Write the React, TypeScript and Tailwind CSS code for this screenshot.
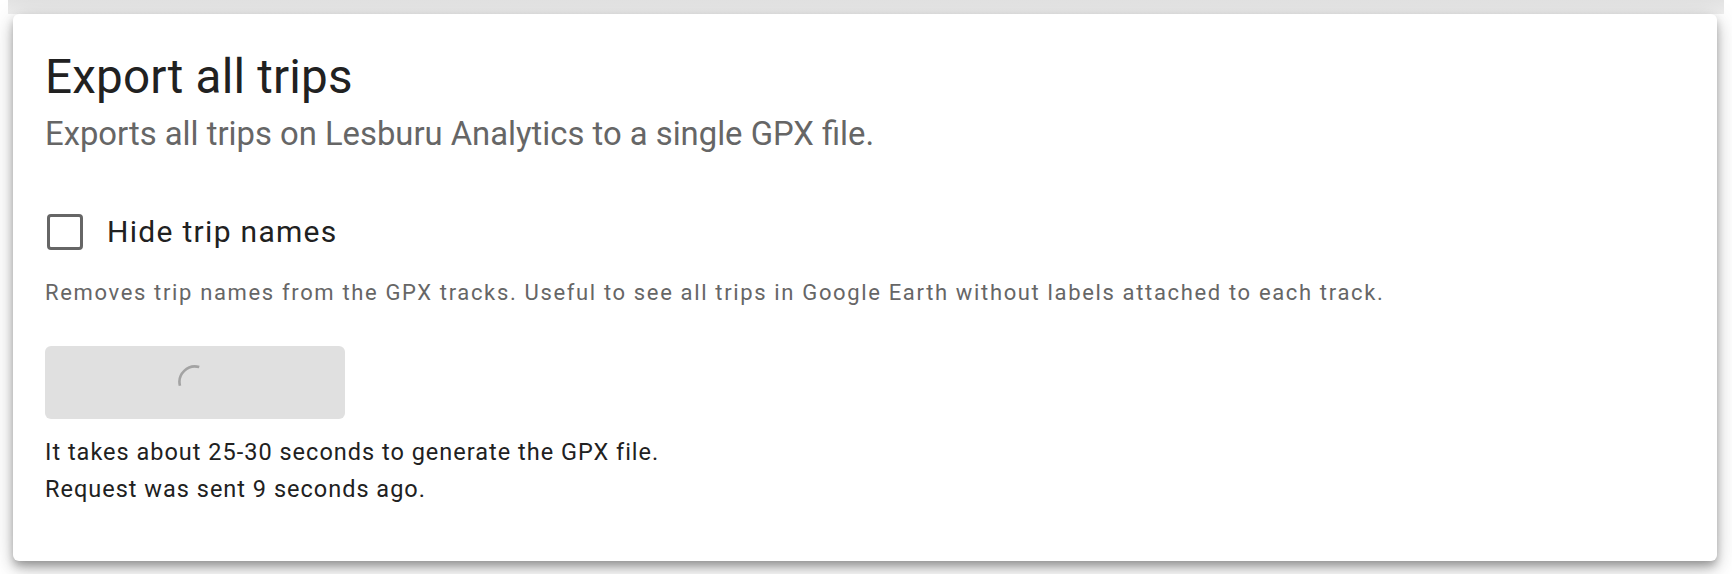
export default function App() {
  return (
    <div className="w-[1732px] h-[574px] bg-white overflow-hidden" style={{ fontFamily: 'Roboto, "Liberation Sans", sans-serif' }}>
      <div className="h-[14px] mx-[8px] bg-gradient-to-b from-[#e3e3e3] to-[#eeeeee]" />
      <div className="ml-[13px] w-[1704px] bg-white rounded-[6px] pl-[32px] pt-[34px] pb-[52px] shadow-[0_5px_8px_-1px_rgba(0,0,0,0.28),0_9px_16px_0_rgba(0,0,0,0.16),0_2px_26px_0_rgba(0,0,0,0.12)]">
        <h2 className="text-[47.6px] leading-[58.8px] text-[#212121] tracking-[0.2px]">Export all trips</h2>
        <p className="mt-[5px] text-[32.8px] leading-[44.8px] text-[#666666]">
          Exports all trips on Lesburu Analytics to a single GPX file.
        </p>
        <label className="mt-[47px] h-[56px] flex items-center">
          <span className="ml-[2px] w-[36px] h-[36px] border-[3px] border-[#666666] rounded-[4px]" />
          <span className="ml-[24px] text-[30px] text-[#212121] tracking-[1.3px]">Hide trip names</span>
        </label>
        <p className="mt-[19px] text-[22px] leading-[28px] text-[#666666] tracking-[1.65px]">
          Removes trip names from the GPX tracks. Useful to see all trips in Google Earth without labels attached to each track.
        </p>
        <button className="mt-[39px] w-[300px] h-[73px] rounded-[6px] bg-[#e0e0e0] flex items-center justify-center">
          <svg width="34" height="34" viewBox="0 0 34 34" fill="none">
            <path d="M1.96 20.75 A15.5 15.5 0 0 1 21.27 2.1" stroke="#a3a3a3" strokeWidth="2.6" />
          </svg>
        </button>
        <p className="mt-[15px] text-[23.5px] leading-[37.5px] text-[#212121] tracking-[1px]">
          It takes about 25-30 seconds to generate the GPX file.
        </p>
        <p className="text-[23.5px] leading-[37.5px] text-[#212121] tracking-[1px]">Request was sent 9 seconds ago.</p>
      </div>
    </div>
  )
}
